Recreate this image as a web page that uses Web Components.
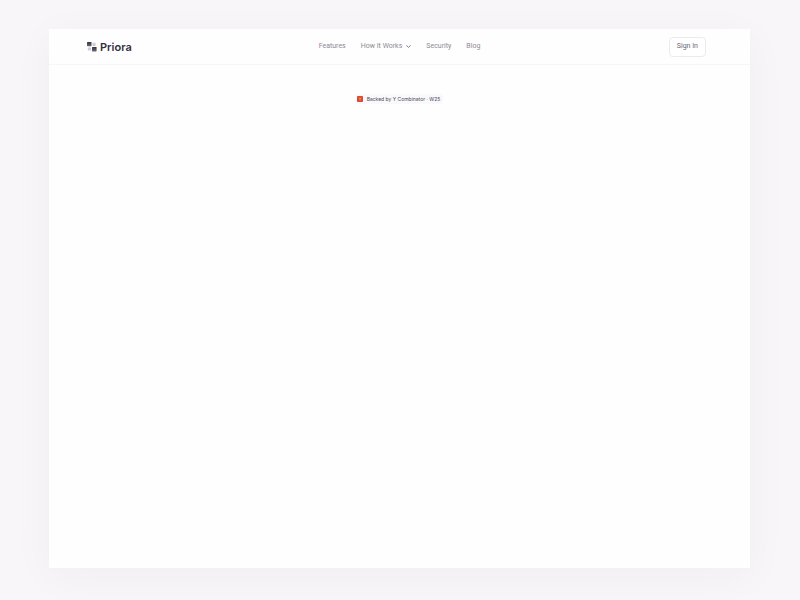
<!DOCTYPE html>
<html lang="en">
<head>
<meta charset="utf-8">
<meta name="viewport" content="width=device-width, initial-scale=1">
<title>Priora</title>
<style>
    body {
        margin: 0;
        background: #f8f6f9;
        font-family: Inter, "Liberation Sans", sans-serif;
    }
</style>
</head>
<body>
<page-frame>
    <site-header slot="header">
        <brand-logo slot="brand">Priora</brand-logo>
        <nav-link href="#features">Features</nav-link>
        <nav-menu>How It Works</nav-menu>
        <nav-link href="#security">Security</nav-link>
        <nav-link href="#blog">Blog</nav-link>
        <outline-button slot="action">Sign In</outline-button>
    </site-header>
    <backer-badge>Backed by Y Combinator · W25</backer-badge>
</page-frame>

<script>
class PageFrame extends HTMLElement {
    constructor() {
        super();
        this.attachShadow({ mode: 'open' });

        this.shadowRoot.innerHTML = `
            <style>
                :host {
                    display: flex;
                    box-sizing: border-box;
                    min-height: 100vh;
                    padding: 29px 50px 32px 49px;
                }
                .frame {
                    flex: 1;
                    display: flex;
                    flex-direction: column;
                    background: #fefefe;
                    box-shadow: 0 8px 40px rgba(50, 40, 50, 0.04);
                }
                main {
                    display: flex;
                    flex-direction: column;
                    align-items: center;
                    padding: 29px 0;
                }
            </style>
            <div class="frame">
                <slot name="header"></slot>
                <main><slot></slot></main>
            </div>
        `;
    }
}

class SiteHeader extends HTMLElement {
    constructor() {
        super();
        this.attachShadow({ mode: 'open' });

        this.shadowRoot.innerHTML = `
            <style>
                :host {
                    display: block;
                    border-bottom: 1px solid #f6f5f7;
                }
                header {
                    display: grid;
                    grid-template-columns: 1fr auto 1fr;
                    align-items: center;
                    height: 35px;
                    padding: 0 37px;
                }
                nav {
                    display: flex;
                    align-items: center;
                    gap: 15px;
                    padding-bottom: 1px;
                }
                .action {
                    justify-self: end;
                    padding-right: 7px;
                }
            </style>
            <header>
                <slot name="brand"></slot>
                <nav><slot></slot></nav>
                <div class="action"><slot name="action"></slot></div>
            </header>
        `;
    }
}

class BrandLogo extends HTMLElement {
    constructor() {
        super();
        this.attachShadow({ mode: 'open' });

        this.shadowRoot.innerHTML = `
            <style>
                :host {
                    display: flex;
                    align-items: center;
                    gap: 3px;
                    color: #33303f;
                    font: 600 11px/12px Inter, sans-serif;
                }
                svg {
                    display: block;
                }
            </style>
            <svg width="11" height="11" viewBox="0 0 11 11" aria-hidden="true">
                <defs>
                    <linearGradient id="tile" x1="0" y1="0" x2="0" y2="1">
                        <stop offset="0" stop-color="#35323f"/>
                        <stop offset="1" stop-color="#6b6877"/>
                    </linearGradient>
                </defs>
                <rect x="1" y="1" width="4.5" height="4.2" rx="0.6" fill="url(#tile)"/>
                <rect x="6.4" y="1.8" width="3.2" height="3.2" rx="0.6" fill="#cfcdd8"/>
                <rect x="1.8" y="6.4" width="3.2" height="3.2" rx="0.6" fill="#cfcdd8"/>
                <rect x="6" y="6" width="4.6" height="4.4" rx="0.6" fill="url(#tile)"/>
            </svg>
            <span><slot></slot></span>
        `;
    }
}

class NavLink extends HTMLElement {
    constructor() {
        super();
        this.attachShadow({ mode: 'open' });

        this.shadowRoot.innerHTML = `
            <style>
                :host {
                    display: block;
                    font: 400 7px/10px Roboto, sans-serif;
                }
                a {
                    display: block;
                    color: #8d8a93;
                    text-decoration: none;
                }
            </style>
            <a><slot></slot></a>
        `;
        this.shadowRoot.querySelector('a').href = this.getAttribute('href') || '#';
    }
}

class NavMenu extends HTMLElement {
    constructor() {
        super();
        this.attachShadow({ mode: 'open' });

        this.shadowRoot.innerHTML = `
            <style>
                :host {
                    display: block;
                }
                button {
                    display: flex;
                    align-items: center;
                    gap: 4px;
                    padding: 0;
                    border: 0;
                    background: none;
                    color: #8d8a93;
                    font: 400 7px/10px Roboto, sans-serif;
                }
            </style>
            <button type="button" aria-haspopup="true">
                <slot></slot>
                <svg width="5" height="5" viewBox="0 0 5 5" aria-hidden="true">
                    <path d="M0.7 1.7 L2.5 3.3 L4.3 1.7" fill="none" stroke="#6f6c7b" stroke-width="0.9" stroke-linecap="round" stroke-linejoin="round"/>
                </svg>
            </button>
        `;
    }
}

class OutlineButton extends HTMLElement {
    constructor() {
        super();
        this.attachShadow({ mode: 'open' });

        this.shadowRoot.innerHTML = `
            <style>
                :host {
                    display: block;
                }
                button {
                    display: block;
                    padding: 3px 7px 5px;
                    border: 1px solid #eceaee;
                    border-radius: 4px;
                    background: #fff;
                    color: #6a6774;
                    font: 400 7px/10px Roboto, sans-serif;
                }
            </style>
            <button type="button"><slot></slot></button>
        `;
    }
}

class BackerBadge extends HTMLElement {
    constructor() {
        super();
        this.attachShadow({ mode: 'open' });

        this.shadowRoot.innerHTML = `
            <style>
                :host {
                    display: flex;
                    align-items: center;
                    gap: 4px;
                    padding: 1px 3px 1px 1px;
                    border-radius: 2px;
                    background: #f9f8fb;
                    color: #4d4a5a;
                    font: 400 5px/8px Inter, sans-serif;
                }
                svg {
                    display: block;
                }
            </style>
            <svg width="6" height="6" viewBox="0 0 6 6" aria-hidden="true">
                <rect width="6" height="6" rx="0.8" fill="#dc4a2c"/>
                <path d="M2 1.7 L3 3.2 L4 1.7 M3 3.2 V4.5" fill="none" stroke="#f6b9a6" stroke-width="0.6"/>
            </svg>
            <span><slot></slot></span>
        `;
    }
}

customElements.define('page-frame', PageFrame);
customElements.define('site-header', SiteHeader);
customElements.define('brand-logo', BrandLogo);
customElements.define('nav-link', NavLink);
customElements.define('nav-menu', NavMenu);
customElements.define('outline-button', OutlineButton);
customElements.define('backer-badge', BackerBadge);
</script>
</body>
</html>
